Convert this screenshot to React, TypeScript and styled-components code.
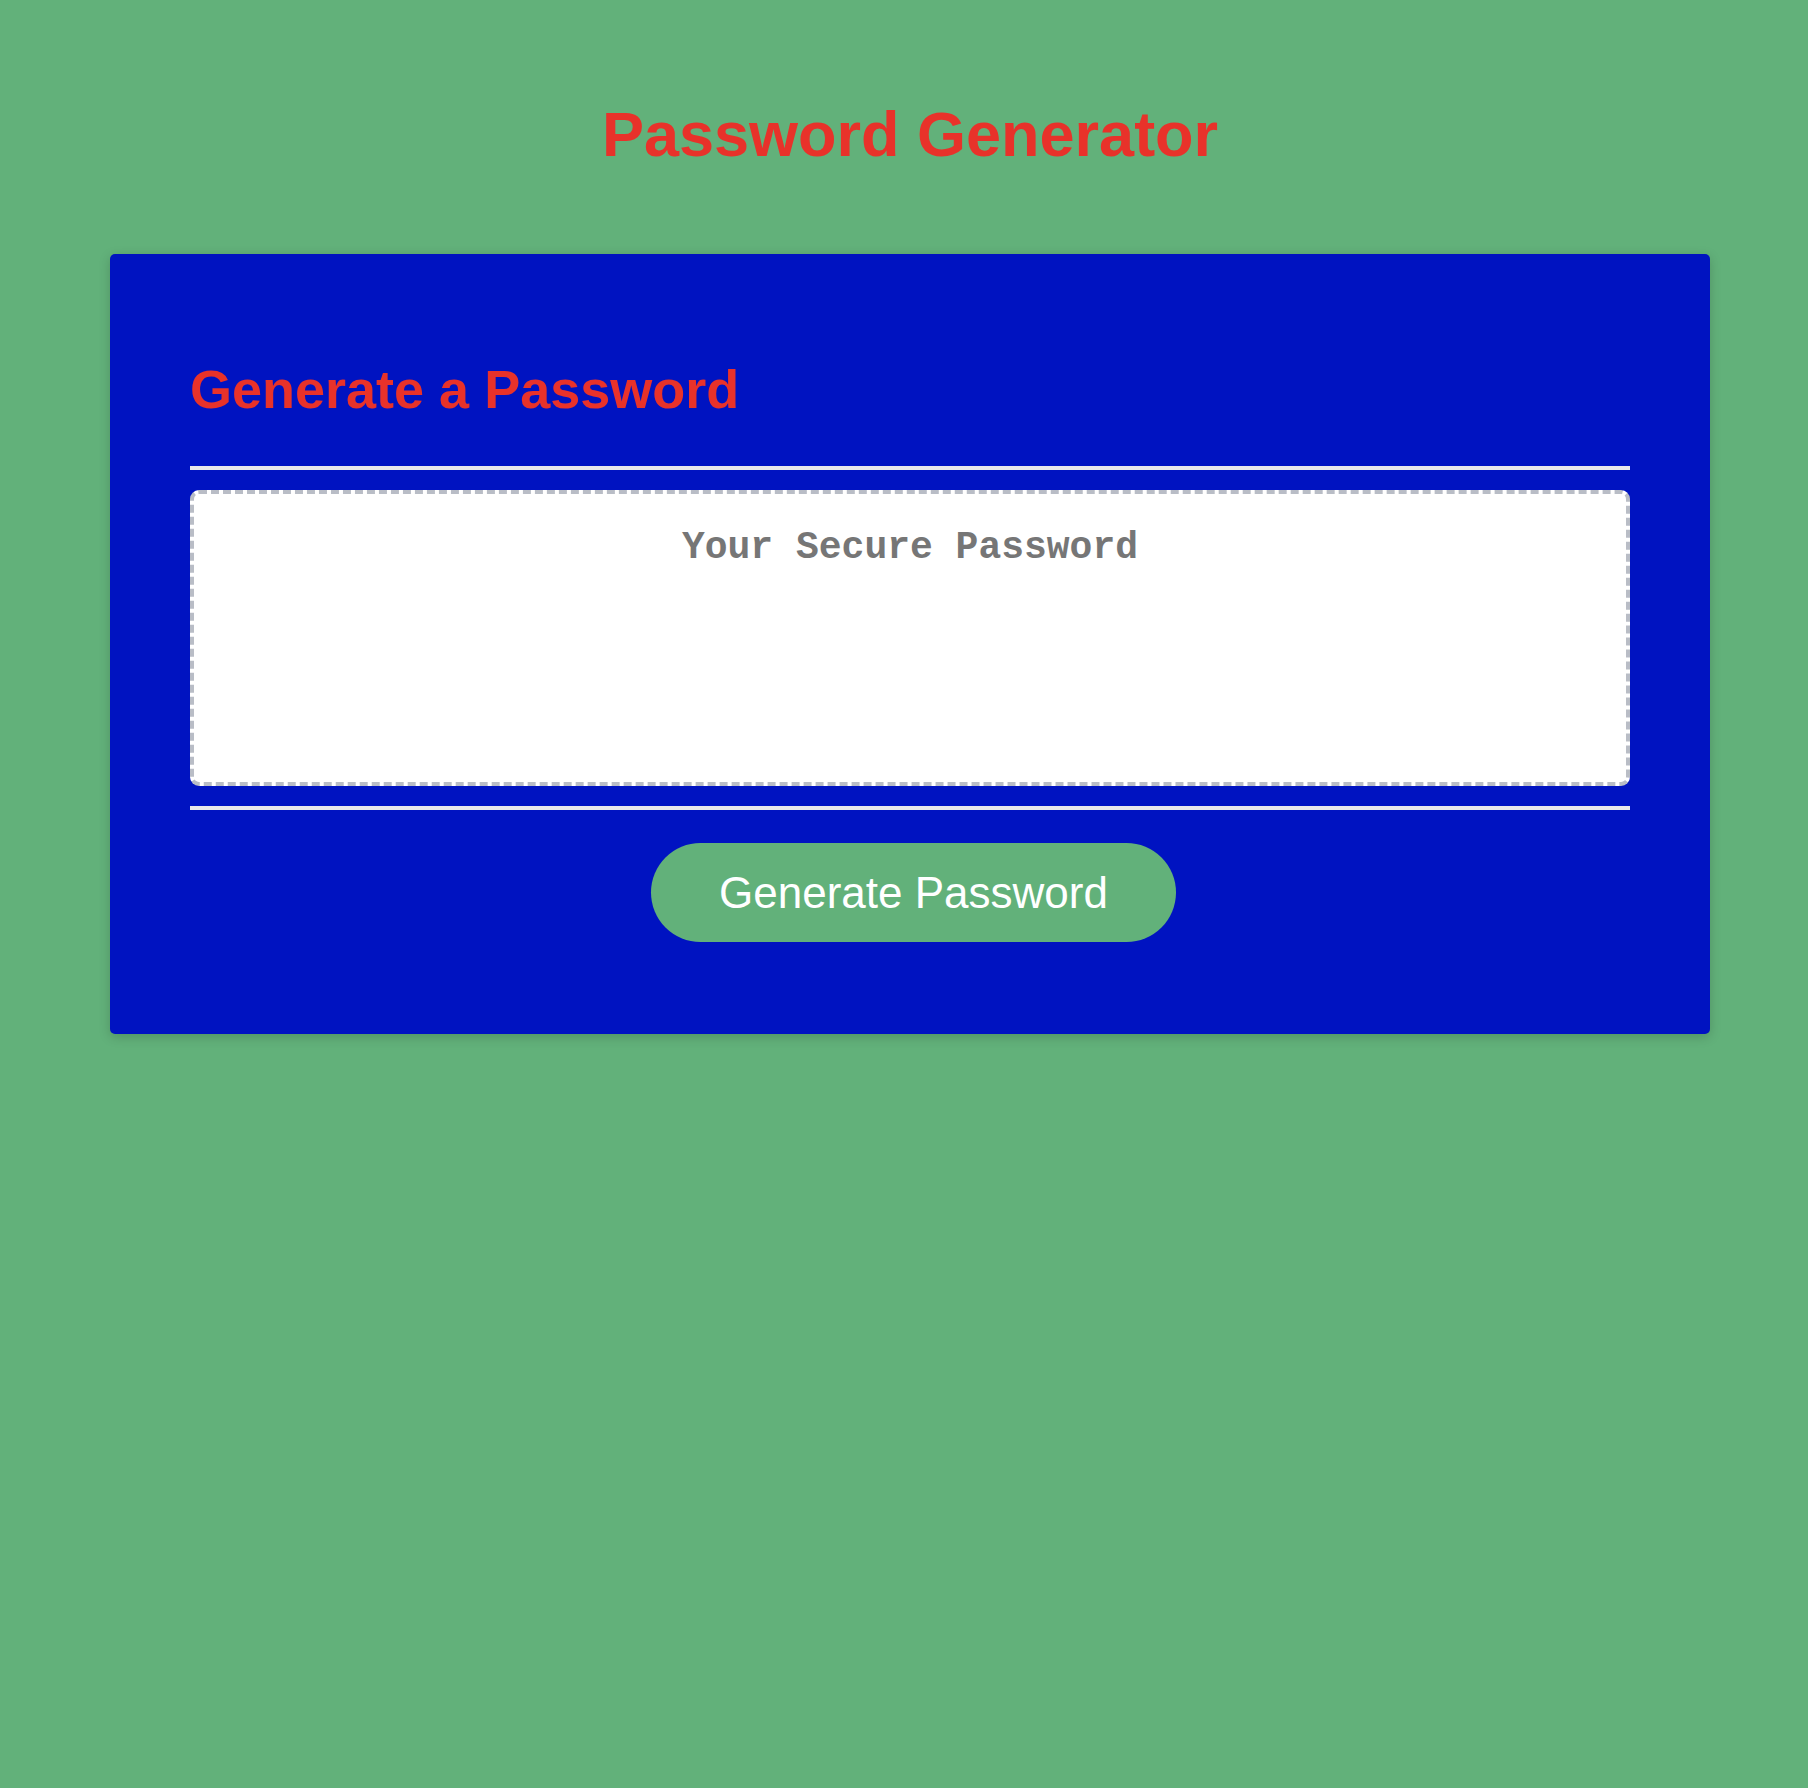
import React from "react";
import styled, { createGlobalStyle } from "styled-components";

const GlobalStyle = createGlobalStyle`
  html, body {
    margin: 0;
    padding: 0;
    background: #62b17a;
    min-height: 100%;
  }
  body {
    font-family: "Liberation Sans", Arial, Helvetica, sans-serif;
  }
  * { box-sizing: border-box; }
`;

const Page = styled.div`
  min-height: 1788px;
  padding: 97px 98px 0 110px;
  background: #62b17a;
`;

const Title = styled.h1`
  margin: 0;
  text-align: center;
  font-size: 63px;
  font-weight: 700;
  line-height: 74px;
  color: #e8322a;
`;

const Card = styled.section`
  margin-top: 83px;
  background: #0013c1;
  border-radius: 5px;
  box-shadow: 0 3px 12px rgba(0, 0, 0, 0.18);
  padding: 80px 80px 92px;
`;

const CardTitle = styled.h2`
  margin: 24px 0 0;
  font-size: 54px;
  font-weight: 700;
  line-height: 62px;
  color: #e8322a;
`;

const Rule = styled.div<{ $top: number }>`
  margin-top: ${(p) => p.$top}px;
  height: 4px;
  background: #e8e8ea;
`;

const Output = styled.textarea`
  display: block;
  width: 100%;
  height: 296px;
  margin-top: 20px;
  padding: 32px 16px 16px;
  border: 4px dashed #b9bdc6;
  border-radius: 9px;
  background: #ffffff;
  resize: none;
  text-align: center;
  font-family: "Liberation Mono", "Courier New", monospace;
  font-weight: 700;
  font-size: 38px;
  color: #333;
  outline: none;
  &::placeholder {
    color: #767676;
  }
`;

const Footer = styled.div`
  display: flex;
  justify-content: center;
  margin-top: 33px;
  padding-left: 7px;
`;

const GenerateButton = styled.button`
  border: none;
  border-radius: 50px;
  background: #62b17a;
  color: #ffffff;
  font-family: "Liberation Sans", Arial, Helvetica, sans-serif;
  font-size: 44px;
  line-height: 51px;
  padding: 24px 68px;
  cursor: pointer;
`;

export default function App() {
  return (
    <>
      <GlobalStyle />
      <Page>
        <Title>Password Generator</Title>
        <Card>
          <CardTitle>Generate a Password</CardTitle>
          <Rule $top={46} />
          <Output readOnly placeholder="Your Secure Password" aria-label="Generated Password" />
          <Rule $top={20} />
          <Footer>
            <GenerateButton>Generate Password</GenerateButton>
          </Footer>
        </Card>
      </Page>
    </>
  );
}
